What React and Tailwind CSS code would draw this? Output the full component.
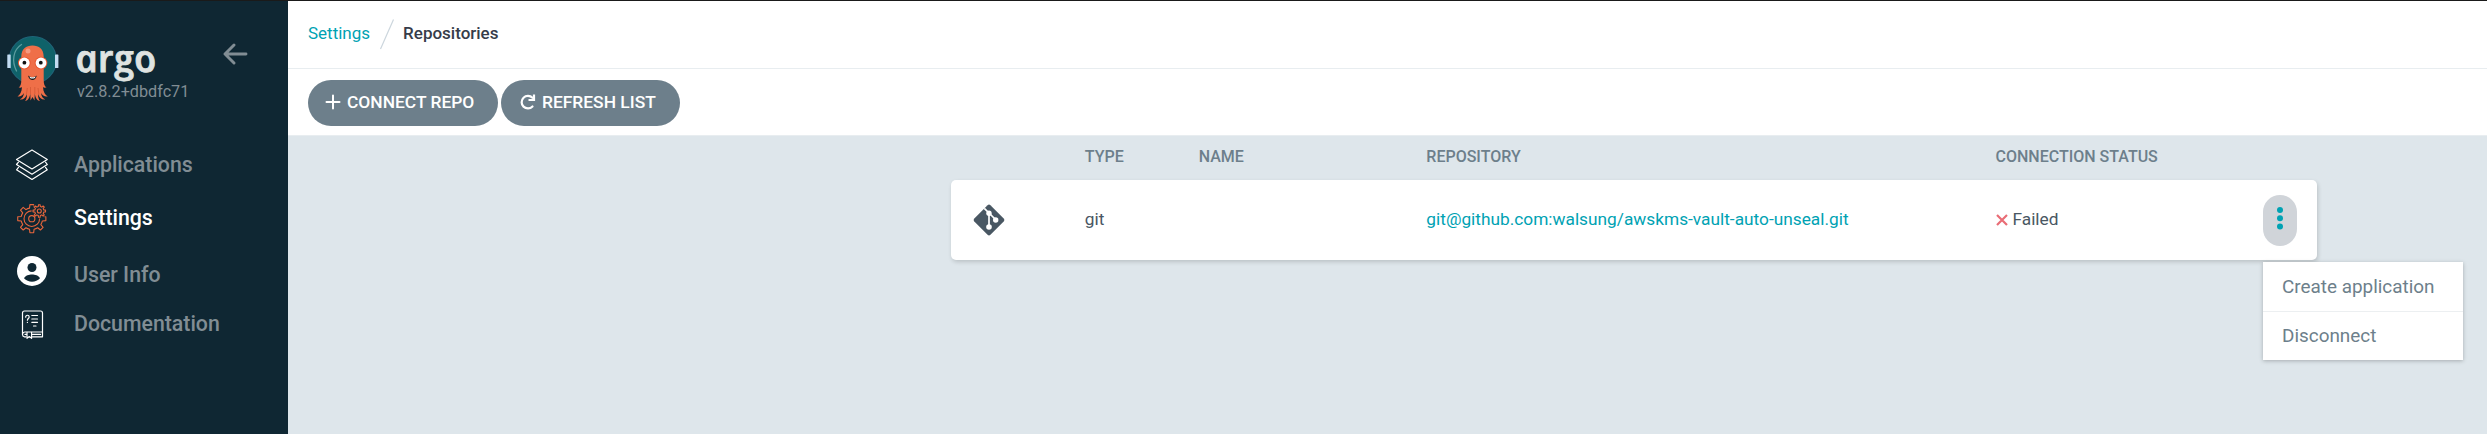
import React from "react";

function gearPath(cx, cy, rIn, rOut, teeth, offset = 0) {
  const step = (Math.PI * 2) / teeth;
  const point = (r, a) => `${(cx + r * Math.cos(a)).toFixed(2)} ${(cy + r * Math.sin(a)).toFixed(2)}`;
  let d = "";
  for (let i = 0; i < teeth; i++) {
    const a = offset + i * step;
    d += `${i ? "L" : "M"}${point(rIn, a - step * 0.27)}L${point(rOut, a - step * 0.17)}L${point(rOut, a + step * 0.17)}L${point(rIn, a + step * 0.27)}`;
    d += `A${rIn} ${rIn} 0 0 1 ${point(rIn, a + step * 0.73)}`;
  }
  return d + "Z";
}

function Octopus() {
  return (
    <svg width="54" height="68" viewBox="6 35 54 68" fill="none">
      <circle cx="32.8" cy="60" r="23.5" fill="#0f6269" stroke="#1f6478" strokeWidth="1.2" />
      <path d="M16.5 71C11.5 61 13 50 21.5 44.500" stroke="#5c9da0" strokeWidth="1.3" strokeLinecap="round" />
      <rect x="7.300" y="54.500" width="3.400" height="13.500" rx=".6" fill="#c3dcf2" />
      <rect x="55" y="54.500" width="3.400" height="13.500" rx=".6" fill="#c3dcf2" />
      <path d="M21.300 57C21.300 49 26 45.500 32.500 45.500S43.700 49 43.700 57V80C43.700 84 44.500 86.500 46.500 87.300C44.800 88 43.500 87.500 43 87C43.300 92 45 95 47.800 96.500C44.500 97 42.500 95.500 41 93C41.300 96.500 43 98.500 45.300 99.500C41.500 100 39.200 97.500 38 94C38 97.500 38.800 99.800 40 101C36.800 100.500 35.300 97.500 34.800 93.500L34.500 100.500L32.500 97L30.500 100.500L30.300 93.500C29.800 97.500 28.200 100.500 25 101C26.300 99.800 27 97.500 27 94C25.800 97.500 23.500 100 19.700 99.500C22 98.500 23.700 96.500 24 93C22.500 95.500 20.500 97 17.500 96.500C20 95 21.700 92 22 87C21.500 87.500 20.200 88 18.600 87.300C20.500 86.500 21.300 84 21.300 80Z" fill="#ef6f48" />
      <circle cx="28" cy="51" r="2.500" fill="#f69a80" />
      <circle cx="24.300" cy="63" r="6.300" fill="#e9552d" />
      <circle cx="41" cy="63" r="6.300" fill="#e9552d" />
      <circle cx="24.300" cy="63" r="5.400" fill="#fff" />
      <circle cx="41" cy="63" r="5.400" fill="#fff" />
      <circle cx="24.400" cy="62.700" r="1.900" fill="#111" />
      <circle cx="40.800" cy="62.700" r="1.900" fill="#111" />
      <path d="M28 75.500C29.500 81.500 35.500 81.500 36.800 75.500C34 77.800 31 77.800 28 75.500Z" fill="#10161a" />
      <path d="M29.500 76.400C31.500 77.600 33.500 77.600 35.500 76.400L35 78C33 78.700 31.500 78.700 30 78Z" fill="#fff" />
      <path d="M27.300 88L26.500 94M30.500 87V94M34.800 87V94M38 88L38.800 94" stroke="#c9502f" strokeWidth=".6" />
    </svg>
  );
}

function BackArrow() {
  return (
    <svg className="ml-auto mr-[40px] mt-[42px]" width="25" height="22" viewBox="0 0 25 22" fill="none" stroke="#818d94" strokeWidth="2.900" strokeLinecap="round" strokeLinejoin="round">
      <path d="M11 2L2 11L11 20M2 11H23" />
    </svg>
  );
}

function LayersIcon() {
  return (
    <svg width="34" height="34" viewBox="0 0 34 34" fill="none" stroke="#fff" strokeWidth="1.200" strokeLinejoin="round" strokeLinecap="round">
      <path d="M17 2L32.300 11.500L17 21L1.500 11.500Z" />
      <path d="M3.500 14.200L1.500 16.500L17 26.200L32.300 16.500L30.500 14.200" />
      <path d="M3.500 19.400L1.500 21.800L17 31.500L32.300 21.800L30.500 19.400" />
    </svg>
  );
}

function GearsIcon() {
  return (
    <svg width="34" height="34" viewBox="15 202 34 34" fill="none" stroke="#e9663c" strokeWidth="1.100" strokeLinejoin="round">
      <defs>
        <mask id="gear-cut">
          <rect x="10" y="195" width="45" height="45" fill="#fff" />
          <circle cx="39.300" cy="211" r="7.600" fill="#000" />
        </mask>
      </defs>
      <g mask="url(#gear-cut)">
        <path d={gearPath(31.8, 218.7, 10.8, 14.2, 8, 0)} />
        <circle cx="31.800" cy="218.700" r="7.800" />
      </g>
      <circle cx="31.800" cy="218.700" r="3.100" />
      <path d={gearPath(39.3, 211, 4.6, 6.3, 8, 0)} />
      <circle cx="39.300" cy="211" r="2" />
    </svg>
  );
}

function UserIcon() {
  return (
    <svg width="34" height="34" viewBox="0 0 34 34">
      <circle cx="17" cy="17" r="15" fill="#fff" />
      <circle cx="17" cy="13.500" r="4.500" fill="#0f2733" />
      <path d="M9 24.300C10.500 21.300 14 20.400 17 20.400S23.500 21.300 25 24.300C23 26.600 20 27.700 17 27.700S11 26.600 9 24.300Z" fill="#0f2733" />
    </svg>
  );
}

function BookIcon() {
  return (
    <svg width="34" height="34" viewBox="15 308 34 34" fill="none" stroke="#fff" strokeWidth="1.200" strokeLinecap="round" strokeLinejoin="round">
      <path d="M26 336.800H24.500A2.200 2.200 0 0 1 22.500 334.600V313A2 2 0 0 1 24.500 311H40.500A2 2 0 0 1 42.500 313V336.800H32.500" />
      <path d="M42.500 332H24.700A2.300 2.300 0 0 0 22.500 334M25 334.400H26.500M32.500 334.400H40.500" />
      <path d="M27 332.300V338.300L29.300 336.500L31.600 338.300V332.300" />
      <path d="M31.800 315.500H37.500M31.800 319H37.500M31.800 322.300H37.500M33.500 326H36" />
      <path d="M25.700 317.200C25.700 314.500 29.200 314.700 29.200 317C29.200 318.500 27.400 318.500 27.400 320.200M27.400 322.300V322.500" />
    </svg>
  );
}

function GitIcon() {
  return (
    <svg width="34" height="34" viewBox="0 0 34 34">
      <rect x="5.600" y="5.600" width="22.800" height="22.800" rx="2" fill="#495763" transform="rotate(45 17 17)" />
      <g stroke="#fff" strokeWidth="1.700" fill="none">
        <path d="M12.300 5.300L17 10L24 17M17 10V24" />
      </g>
      <g fill="#fff">
        <circle cx="17" cy="10.300" r="2.700" />
        <circle cx="23.700" cy="17" r="2.700" />
        <circle cx="17" cy="24" r="2.800" />
      </g>
    </svg>
  );
}

function NavItem({ icon, label, active, className = "", iconClass = "" }) {
  return (
    <div className={`flex items-center pl-[15px] ${className}`}>
      <span className={iconClass}>{icon}</span>
      <span className={`ml-[25px] pt-[2px] text-[21.300px] font-medium ${active ? "text-white" : "text-[#818d94]"}`}>{label}</span>
    </div>
  );
}

function Sidebar() {
  return (
    <aside className="flex w-[288px] shrink-0 flex-col bg-[#0f2733]">
      <div className="flex h-[136px]">
        <div className="ml-[6px] mt-[34px] w-[54px]">
          <Octopus />
        </div>
        <div className="ml-[16px] mt-[39px] flex w-[120px] flex-col">
          <span className="block h-[42px] w-[80px] origin-[0_30px] text-[40px] font-semibold italic leading-[34px] text-[#dfe3e1] font-['Open_Sans',sans-serif] [transform:translateX(1px)_scale(0.97,0.95)_skewX(12deg)] [-webkit-text-stroke:0.8px_#dfe3e1]">argo</span>
          <span className="ml-[1px] text-[16.200px] leading-[20px] text-[#818d94]">v2.8.2+dbdfc71</span>
        </div>
        <BackArrow />
      </div>
      <nav>
        <NavItem icon={<LayersIcon />} label="Applications" className="h-[53px]" iconClass="pt-[2px]" />
        <NavItem icon={<GearsIcon />} label="Settings" active className="h-[53px]" iconClass="pt-[4px]" />
        <NavItem icon={<UserIcon />} label="User Info" className="h-[62px]" iconClass="pb-[6px]" />
        <NavItem icon={<BookIcon />} label="Documentation" className="h-[36px]" iconClass="pt-[3px]" />
      </nav>
    </aside>
  );
}

function Toolbar() {
  const button = "flex h-[46px] items-center whitespace-nowrap rounded-full bg-[#6d7f8b] text-[17.400px] font-medium text-white";
  return (
    <div className="flex h-[67px] gap-[3px] border-b border-[#e8edf0] bg-white pl-[20px] pt-[11px]">
      <button className={`${button} w-[190px] pl-[17px]`}>
        <svg className="mb-[2px]" width="16" height="16" viewBox="0 0 16 16" stroke="#fff" strokeWidth="2" strokeLinecap="round">
          <path d="M8 1.500V14.500M1.500 8H14.500" />
        </svg>
        <span className="ml-[6px] pb-[2px]">CONNECT REPO</span>
      </button>
      <button className={`${button} w-[179px] pl-[18px]`}>
        <svg className="mb-[2px]" width="17" height="16" viewBox="0 0 17 16" fill="none" stroke="#fff" strokeWidth="2.200">
          <path d="M13.500 3.800A6.300 6.300 0 1 0 13.500 12.500" strokeLinecap="round" />
          <path d="M15 .5V6H9.500" />
        </svg>
        <span className="ml-[6px] pb-[2px]">REFRESH LIST</span>
      </button>
    </div>
  );
}

function RepositoryTable() {
  const cell = "px-[20px]";
  return (
    <div className="ml-[663px] w-[1366px]">
      <div className="grid h-[44px] grid-cols-12 pt-[9px] text-[16px] font-medium leading-[24px] text-[#6d7f8b]">
        <div />
        <div className={cell}>TYPE</div>
        <div className={`${cell} col-span-2`}>NAME</div>
        <div className={`${cell} col-span-5`}>REPOSITORY</div>
        <div className={`${cell} col-span-3`}>CONNECTION STATUS</div>
      </div>
      <div className="grid h-[80px] grid-cols-12 items-center rounded-[5px] bg-white text-[17.300px] text-[#495763] shadow-[1px_2px_4px_rgba(0,0,0,0.16)]">
        <div className="pl-[21px]">
          <GitIcon />
        </div>
        <div className={cell}>git</div>
        <div className="col-span-2" />
        <a className={`${cell} col-span-5 text-[#00a2b3]`}>git@github.com:walsung/awskms-vault-auto-unseal.git</a>
        <div className={`${cell} col-span-3 flex items-center pr-0`}>
          <svg width="12" height="12" viewBox="0 0 12 12" stroke="#e96d76" strokeWidth="2.200">
            <path d="M1 1L11 11M11 1L1 11" />
          </svg>
          <span className="ml-[5px]">Failed</span>
          <div className="relative ml-auto mr-[20px]">
            <button className="flex h-[51px] w-[34px] flex-col items-center rounded-[17px] bg-[#d0d4d9] pt-[12px]">
              <svg width="6" height="23" viewBox="0 0 6 23" fill="#00a2b3">
                <circle cx="3" cy="3" r="3" />
                <circle cx="3" cy="11.300" r="3" />
                <circle cx="3" cy="19.500" r="3" />
              </svg>
            </button>
            <ul className="absolute left-0 top-[67px] w-[200px] bg-white text-[18.900px] text-[#6d7f8b] shadow-[0_1px_4px_rgba(0,0,0,0.25)]">
              <li className="h-[50px] border-b border-[#eceff1] pl-[19px] leading-[49px]">Create application</li>
              <li className="h-[48px] pl-[19px] leading-[48px]">Disconnect</li>
            </ul>
          </div>
        </div>
      </div>
    </div>
  );
}

export default function App() {
  return (
    <div className="flex h-[434px] w-[2487px] overflow-hidden border-t border-[#1a1a1a] bg-[#dee6eb] font-['Roboto',sans-serif]">
      <Sidebar />
      <main className="flex-1">
        <div className="flex h-[68px] items-center border-b border-[#e8edf0] bg-white pb-[1px] pl-[20px] text-[17px]">
          <a className="text-[#00a2b3]">Settings</a>
          <svg className="mx-[8.500px]" width="16" height="32" viewBox="0 0 16 32" stroke="#ccd6dd" strokeWidth="1.200">
            <path d="M1.500 31L14.500 1.500" />
          </svg>
          <span className="font-medium text-[#363c4a]">Repositories</span>
        </div>
        <Toolbar />
        <RepositoryTable />
      </main>
    </div>
  );
}
